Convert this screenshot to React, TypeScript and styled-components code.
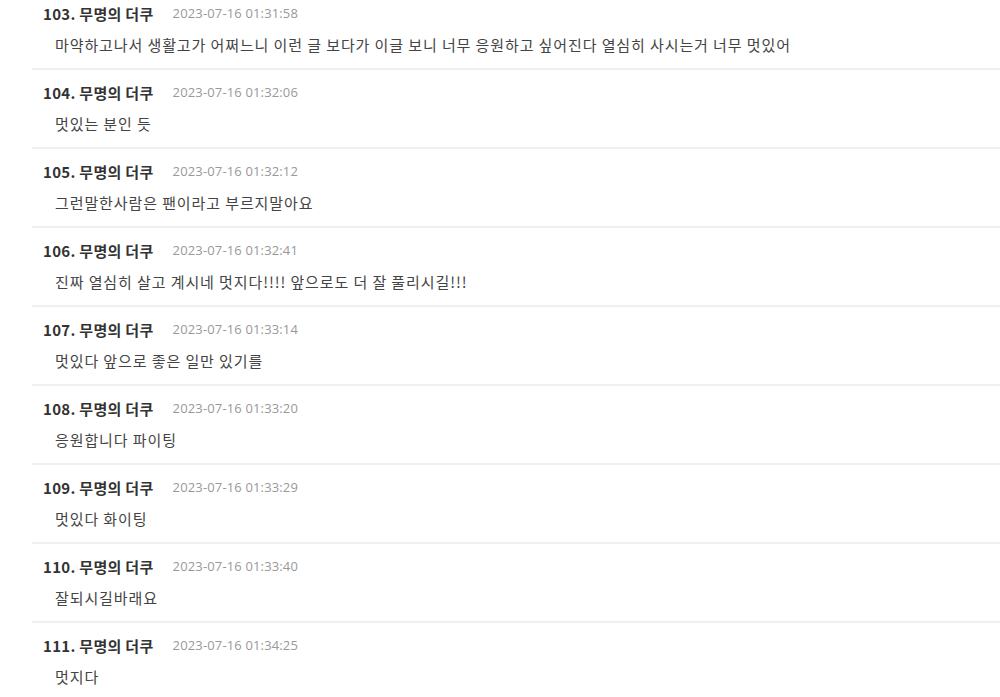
import { FC } from 'react';
import styled, { createGlobalStyle } from 'styled-components';

const GlobalStyle = createGlobalStyle`
  body {
    margin: 0;
    background: #fff;
    font-family: "Noto Sans CJK KR", "Noto Sans", sans-serif;
    overflow: hidden;
  }
`;

const List = styled.ul`
  list-style: none;
  margin: -9px 0 0;
  padding: 0 0 0 32px;
`;

const Item = styled.li`
  padding: 12px 0 13px 11px;
  border-bottom: 2px solid #f0f0f0;
`;

const Header = styled.div`
  display: flex;
  align-items: center;
  gap: 19px;
  height: 20px;
`;

const Author = styled.span`
  font-size: 15px;
  font-weight: 700;
  color: #333;
  letter-spacing: 0.3px;
`;

const DateText = styled.span`
  font-family: "Open Sans", "Noto Sans CJK KR", sans-serif;
  font-size: 13px;
  color: #999;
  letter-spacing: 0.15px;
`;

const Body = styled.p`
  margin: 12px 0 0;
  padding-left: 12px;
  font-size: 15px;
  line-height: 20px;
  color: #444;
  letter-spacing: 0.9px;
`;

interface Comment {
  no: number;
  date: string;
  text: string;
}

const comments: Comment[] = [
  { no: 103, date: '2023-07-16 01:31:58', text: '마약하고나서 생활고가 어쩌느니 이런 글 보다가 이글 보니 너무 응원하고 싶어진다 열심히 사시는거 너무 멋있어' },
  { no: 104, date: '2023-07-16 01:32:06', text: '멋있는 분인 듯' },
  { no: 105, date: '2023-07-16 01:32:12', text: '그런말한사람은 팬이라고 부르지말아요' },
  { no: 106, date: '2023-07-16 01:32:41', text: '진짜 열심히 살고 계시네 멋지다!!!! 앞으로도 더 잘 풀리시길!!!' },
  { no: 107, date: '2023-07-16 01:33:14', text: '멋있다 앞으로 좋은 일만 있기를' },
  { no: 108, date: '2023-07-16 01:33:20', text: '응원합니다 파이팅' },
  { no: 109, date: '2023-07-16 01:33:29', text: '멋있다 화이팅' },
  { no: 110, date: '2023-07-16 01:33:40', text: '잘되시길바래요' },
  { no: 111, date: '2023-07-16 01:34:25', text: '멋지다' },
];

const App: FC = () => (
  <>
    <GlobalStyle />
    <List>
      {comments.map((c) => (
        <Item key={c.no}>
          <Header>
            <Author>{c.no}. 무명의 더쿠</Author>
            <DateText>{c.date}</DateText>
          </Header>
          <Body>{c.text}</Body>
        </Item>
      ))}
    </List>
  </>
);

export default App;
